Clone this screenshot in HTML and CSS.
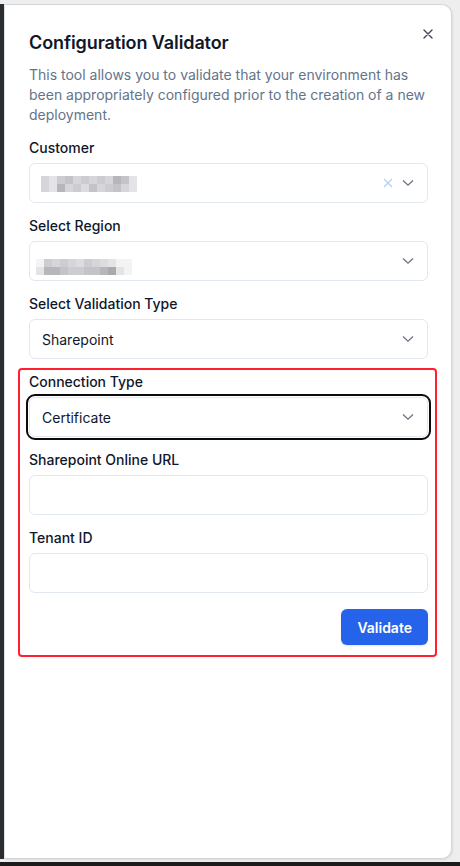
FILE: index.html
```html
<!DOCTYPE html>
<html lang="en">
<head>
<meta charset="utf-8">
<title>Configuration Validator</title>
<link rel="stylesheet" href="styles.css">
</head>
<body>
<div class="screen">
  <div class="side"></div>
  <div class="panel">
    <button class="close" aria-label="Close">
      <svg width="10" height="10" viewBox="0 0 10 10"><path d="M1 1L9 9M9 1L1 9" stroke="#3f4654" stroke-width="1.4" stroke-linecap="round" fill="none"/></svg>
    </button>
    <h1 class="title">Configuration Validator</h1>
    <p class="desc">This tool allows you to validate that your environment has been appropriately configured prior to the creation of a new deployment.</p>

    <div class="form">
      <div class="field">
        <label class="label">Customer</label>
        <div class="select">
          <div class="mosaic mosaic-customer">
            <i class="c3"></i><i class="c1"></i><i class="c4"></i><i class="c5"></i><i class="c3"></i><i class="c4"></i><i class="c3"></i><i class="c4"></i><i class="c3"></i><i class="c6"></i><i class="c5"></i><i class="c1"></i>
            <i class="c3"></i><i class="c1"></i><i class="c6"></i><i class="c3"></i><i class="c4"></i><i class="c2"></i><i class="c5"></i><i class="c3"></i><i class="c4"></i><i class="c5"></i><i class="c3"></i><i class="c1"></i>
          </div>
          <span class="icons">
            <svg class="clear" width="10" height="10" viewBox="0 0 10 10"><path d="M1 1L9 9M9 1L1 9" stroke="#b4d0f5" stroke-width="1.3" fill="none"/></svg>
            <svg class="chev" width="12" height="8" viewBox="0 0 12 8"><path d="M1 1.5L6 6.2L11 1.5" stroke="#6b7280" stroke-width="1.3" fill="none"/></svg>
          </span>
        </div>
      </div>

      <div class="field">
        <label class="label">Select Region</label>
        <div class="select">
          <div class="mosaic mosaic-region">
            <i class="c0"></i><i class="c4"></i><i class="c3"></i><i class="c4"></i><i class="c3"></i><i class="c2"></i><i class="c4"></i><i class="c3"></i><i class="c2"></i><i class="c1"></i><i class="c0"></i><i class="c0"></i>
            <i class="c1"></i><i class="c6"></i><i class="c6"></i><i class="c5"></i><i class="c4"></i><i class="c4"></i><i class="c5"></i><i class="c5"></i><i class="c6"></i><i class="c7"></i><i class="c1"></i><i class="c0"></i>
          </div>
          <span class="icons">
            <svg class="chev" width="12" height="8" viewBox="0 0 12 8"><path d="M1 1.5L6 6.2L11 1.5" stroke="#6b7280" stroke-width="1.3" fill="none"/></svg>
          </span>
        </div>
      </div>

      <div class="field">
        <label class="label">Select Validation Type</label>
        <div class="select">
          <span class="value">Sharepoint</span>
          <span class="icons">
            <svg class="chev" width="12" height="8" viewBox="0 0 12 8"><path d="M1 1.5L6 6.2L11 1.5" stroke="#6b7280" stroke-width="1.3" fill="none"/></svg>
          </span>
        </div>
      </div>

      <div class="highlight">
        <div class="field">
          <label class="label">Connection Type</label>
          <div class="select focused">
            <span class="value">Certificate</span>
            <span class="icons">
              <svg class="chev" width="12" height="8" viewBox="0 0 12 8"><path d="M1 1.5L6 6.2L11 1.5" stroke="#6b7280" stroke-width="1.3" fill="none"/></svg>
            </span>
          </div>
        </div>

        <div class="field">
          <label class="label">Sharepoint Online URL</label>
          <input class="input" type="text">
        </div>

        <div class="field">
          <label class="label">Tenant ID</label>
          <input class="input" type="text">
        </div>

        <div class="actions">
          <button class="btn">Validate</button>
        </div>
      </div>
    </div>
  </div>
  <div class="gutter"></div>
</div>
</body>
</html>
```
FILE: styles.css
```css
* { box-sizing: border-box; }
html, body { margin: 0; padding: 0; }
body {
  background: #1c1c1c;
  font-family: Inter, "Noto Sans", "Liberation Sans", sans-serif;
  color: #0f172a;
}
.screen {
  height: 862px;
  display: flex;
  background: #eeeeee;
  padding-top: 4px;
  padding-bottom: 3px;
}
.side {
  width: 4px;
  background: #2d2d2d;
  flex: none;
}
.panel {
  position: relative;
  width: 448px;
  flex: none;
  background: #ffffff;
  border: 1px solid #d6d6d6;
  border-left-color: #dbe5ef;
  border-radius: 0 10px 10px 0;
  padding: 24px 23px 0 24px;
  box-shadow: 1px 1px 2px rgba(0,0,0,0.08);
}
.gutter { flex: 1; }
.close {
  position: absolute;
  top: 20px;
  right: 14px;
  width: 18px;
  height: 18px;
  padding: 0;
  border: 0;
  background: transparent;
  display: flex;
  align-items: center;
  justify-content: center;
}
.title {
  margin: 0 0 8px;
  font-size: 18px;
  line-height: 28px;
  font-weight: 600;
  color: #0f172a;
  letter-spacing: -0.1px;
}
.desc {
  margin: 0 0 13px;
  font-size: 14px;
  line-height: 20px;
  color: #64748b;
}
.form {
  display: flex;
  flex-direction: column;
  gap: 13px;
}
.field {
  display: flex;
  flex-direction: column;
  gap: 5px;
}
.label {
  font-size: 14px;
  line-height: 20px;
  font-weight: 450;
  color: #0f172a;
}
.select, .input {
  height: 40px;
  width: 100%;
  border: 1px solid #e2e8f0;
  border-radius: 6px;
  background: #fff;
}
.select {
  display: flex;
  align-items: center;
  padding: 0 13px 0 12px;
}
.input { outline: none; font: inherit; }
.value {
  font-size: 14px;
  color: #0f172a;
  flex: 1;
}
.icons {
  margin-left: auto;
  display: flex;
  align-items: center;
  gap: 9px;
}
.focused {
  outline: 2px solid #0b0b0f;
  outline-offset: 1px;
}
.mosaic {
  display: grid;
  grid-template-columns: repeat(12, 8px);
  grid-auto-rows: 8px;
}
.mosaic i { display: block; }
.mosaic-customer { margin-left: -1px; margin-top: 1px; }
.mosaic-region { margin-left: -6px; margin-top: 11px; }
.c0 { background: #f3f3f4; }
.c1 { background: #e4e4e6; }
.c2 { background: #dcdce0; }
.c3 { background: #d6d6da; }
.c4 { background: #cdcdd1; }
.c5 { background: #c4c4c8; }
.c6 { background: #b6b6bb; }
.c7 { background: #a9a9ae; }
.highlight {
  margin: -4px -9px 0 -11px;
  border: 2px solid #ff1f30;
  border-radius: 4px;
  padding: 2px 7px 10px 9px;
  display: flex;
  flex-direction: column;
  gap: 13px;
}
.actions {
  display: flex;
  justify-content: flex-end;
  margin-top: 3px;
}
.btn {
  height: 36px;
  padding: 0 16px;
  border: 0;
  border-radius: 6px;
  background: #2563eb;
  color: #fff;
  font: inherit;
  font-size: 14px;
  font-weight: 600;
  box-shadow: 0 1px 2px rgba(0,0,0,0.1);
}
```
